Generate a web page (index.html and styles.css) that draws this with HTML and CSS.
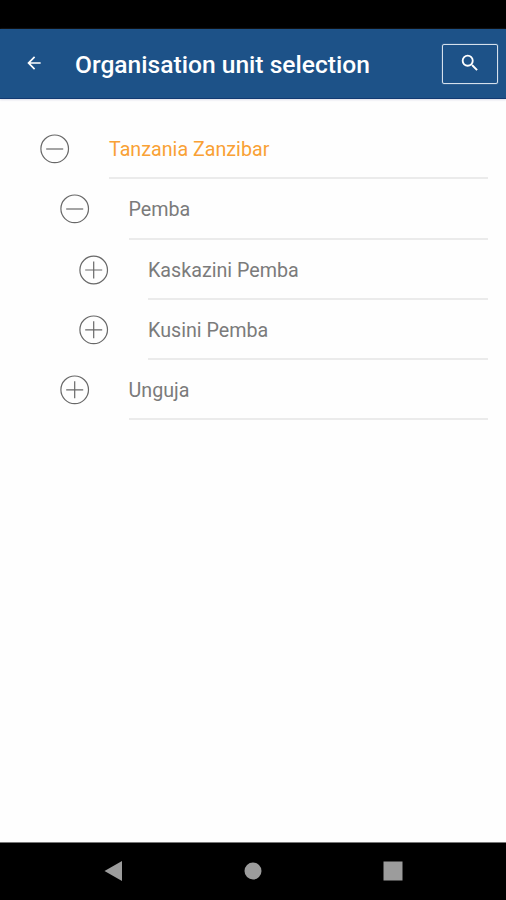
FILE: index.html
```html
<!DOCTYPE html>
<html lang="en">
<head>
    <meta charset="UTF-8">
    <meta name="viewport" content="width=device-width, initial-scale=1.0">
    <title>Organisation unit selection</title>
    <link rel="stylesheet" href="styles.css">
</head>
<body>
    <div class="screen">
        <div class="status-bar"></div>
        <header class="toolbar">
            <svg class="back" viewBox="0 0 24 24"><path d="M20 11H7.830l5.590-5.590L12 4l-8 8 8 8 1.410-1.410L7.830 13H20v-2z"/></svg>
            <h1 class="title">Organisation unit selection</h1>
            <button class="search" aria-label="Search">
                <svg viewBox="0 0 24 24"><path d="M15.5 14h-.79l-.28-.27A6.47 6.47 0 0 0 16 9.5 6.5 6.5 0 1 0 9.5 16c1.61 0 3.09-.59 4.23-1.57l.27.28v.79l5 4.99L20.49 19l-4.99-5zm-6 0C7.01 14 5 11.99 5 9.5S7.01 5 9.5 5 14 7.01 14 9.5 11.99 14 9.5 14z"/></svg>
            </button>
        </header>
        <main class="tree">
            <div class="row">
                <svg class="toggle" viewBox="0 0 30 30"><circle cx="14.7" cy="14.8" r="13.8"/><path d="M6.2 15h17"/></svg>
                <div class="label selected">Tanzania Zanzibar</div>
            </div>
            <div class="row level-1">
                <svg class="toggle" viewBox="0 0 30 30"><circle cx="14.7" cy="14.8" r="13.8"/><path d="M6.2 15h17"/></svg>
                <div class="label">Pemba</div>
            </div>
            <div class="row level-2">
                <svg class="toggle" viewBox="0 0 30 30"><circle cx="14.7" cy="15" r="13.8"/><path d="M6.2 15h17M14.7 6.5v17"/></svg>
                <div class="label">Kaskazini Pemba</div>
            </div>
            <div class="row level-2">
                <svg class="toggle" viewBox="0 0 30 30"><circle cx="14.7" cy="14.8" r="13.8"/><path d="M6.2 14.8h17M14.7 6.3v17"/></svg>
                <div class="label">Kusini Pemba</div>
            </div>
            <div class="row level-1">
                <svg class="toggle" viewBox="0 0 30 30"><circle cx="14.7" cy="14.8" r="13.8"/><path d="M6.2 14.8h17M14.7 6.3v17"/></svg>
                <div class="label">Unguja</div>
            </div>
        </main>
        <nav class="nav-bar">
            <svg viewBox="0 0 24 24"><path d="M3.5 12 21 2v20z"/></svg>
            <svg viewBox="0 0 24 24"><circle cx="12" cy="12" r="8.5"/></svg>
            <svg viewBox="0 0 24 24"><path d="M2.5 2.5h19v19h-19z"/></svg>
        </nav>
    </div>
</body>
</html>
```
FILE: styles.css
```css
* { box-sizing: border-box; }
body { margin: 0; font-family: Roboto, sans-serif; background: #fefefe; }
.screen { display: flex; flex-direction: column; height: 900px; }
.status-bar { height: 29px; background: #000; }
.toolbar { display: flex; align-items: center; height: 70px; padding: 0 8px 0 24px; background: #1d5288; border-bottom: 1px solid #123a72; box-shadow: 0 1px 2px #dcdce8; }
.back { width: 20px; height: 20px; margin: 0 31px 2px 0; fill: #fff; }
.title { flex: 1; margin: 0; padding-top: 2px; font-size: 24.6px; font-weight: 500; color: #fff; white-space: nowrap; }
.search { display: flex; align-items: center; justify-content: center; width: 56px; height: 40px; padding: 0 1px 2px 0; background: none; border: 1.5px solid #d5e0ec; border-radius: 2px; box-shadow: 0 0 1px #d5e0ec; }
.search svg { width: 22px; height: 22px; fill: #fff; }
.tree { flex: 1; padding: 20px 18px 0 40px; }
.row { display: flex; align-items: center; height: 60.25px; }
.level-1 { padding-left: 19.5px; }
.level-2 { padding-left: 39px; }
.toggle { width: 30px; height: 30px; margin-right: 39px; fill: none; stroke: #686868; stroke-width: 1.2; }
.label { flex: 1; height: 100%; line-height: 61px; font-size: 19.7px; color: #7b7b7b; border-bottom: 2px solid #ebebeb; }
.selected { color: #f9a135; }
.nav-bar { display: flex; align-items: center; justify-content: center; gap: 116px; height: 58px; padding-bottom: 2px; background: #000; border-top: 1px solid #777; }
.nav-bar svg { width: 24px; height: 24px; fill: #9c9c9c; }
```
